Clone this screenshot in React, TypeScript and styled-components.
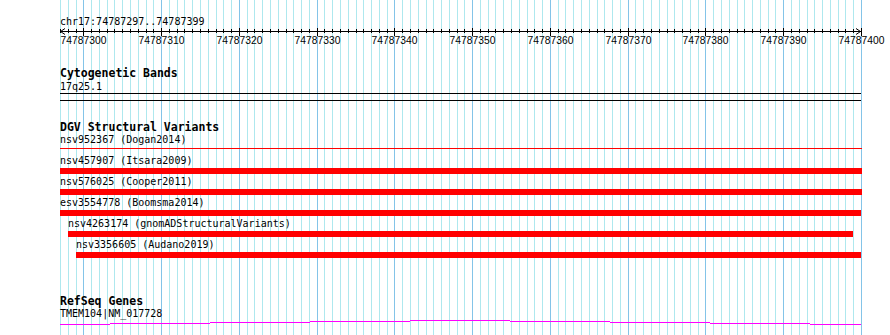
import React from "react";
import styled, { createGlobalStyle } from "styled-components";

const START = 74787297;
const BP = 103;
const LEFT = 60;
const WIDTH = 801;
const PX = WIDTH / BP;

// pixel column (page coords) of a base boundary
const bpX = (i: number) => Math.round(LEFT + i * PX);

const GlobalStyle = createGlobalStyle`
  html, body {
    margin: 0;
    padding: 0;
    background: #ffffff;
  }
  body {
    font-family: "DejaVu Sans Mono", "Liberation Mono", monospace;
  }
`;

const Page = styled.div`
  position: relative;
  width: 890px;
  height: 335px;
  overflow: hidden;
  background: #ffffff;
`;

const GridLayer = styled.svg`
  position: absolute;
  top: 0;
  left: 0;
  z-index: 0;
`;

const Tracks = styled.div`
  position: relative;
  z-index: 1;
  display: flex;
  flex-direction: column;
  margin-left: ${LEFT}px;
  width: ${WIDTH}px;
`;

const Ruler = styled.div`
  display: flex;
  flex-direction: column;
  padding-top: 16px;
`;

const Label = styled.div<{ $indent?: number; $top?: number }>`
  font-family: "DejaVu Sans Mono", "Liberation Mono", monospace;
  font-size: 10px;
  line-height: 11px;
  color: #000;
  white-space: nowrap;
  padding-left: ${({ $indent }) => $indent || 0}px;
  margin-top: ${({ $top }) => $top || 0}px;
`;

const Axis = styled.svg`
  display: block;
  overflow: visible;
`;

const Track = styled.section<{ $top: number }>`
  display: flex;
  flex-direction: column;
  margin-top: ${({ $top }) => $top}px;
`;

const TrackTitle = styled.h3`
  margin: 0;
  font-family: "DejaVu Sans Mono", "Liberation Mono", monospace;
  font-weight: bold;
  font-size: 11.5px;
  line-height: 13px;
  color: #000;
  white-space: nowrap;
`;

const Band = styled.div`
  margin-top: 1px;
  height: 6px;
  border-top: 1px solid #000;
  border-bottom: 1px solid #000;
`;

const FeatureRow = styled.div`
  display: flex;
  flex-direction: column;
  padding-bottom: 2px;
`;

const BarLane = styled.div`
  position: relative;
  height: 6px;
  margin-top: 2px;
`;

const Bar = styled.div<{ $start: number; $end: number; $thin?: boolean }>`
  margin-left: ${({ $start }) => $start}px;
  width: ${({ $start, $end }) => $end - $start}px;
  height: ${({ $thin }) => ($thin ? 1 : 6)}px;
  margin-top: ${({ $thin }) => ($thin ? 1 : 0)}px;
  background: #ff0000;
`;

const GeneLane = styled.svg`
  display: block;
  overflow: visible;
`;

const variants = [
  { name: "nsv952367 (Dogan2014)", start: 0, end: 802, thin: true },
  { name: "nsv457907 (Itsara2009)", start: 0, end: 802 },
  { name: "nsv576025 (Cooper2011)", start: 0, end: 802 },
  { name: "esv3554778 (Boomsma2014)", start: 0, end: 801 },
  { name: "nsv4263174 (gnomADStructuralVariants)", start: 8, end: 793 },
  { name: "nsv3356605 (Audano2019)", start: 16, end: 801 },
];

// intron line drawn in steps, [x1, x2, y] in lane coords
const geneSteps: [number, number, number][] = [
  [0, 50, 5],
  [50, 150, 4],
  [150, 250, 3],
  [250, 350, 2],
  [350, 450, 1],
  [450, 550, 2],
  [550, 650, 3],
  [650, 750, 4],
  [750, 801, 5],
];

function Grid() {
  const lines = [];
  for (let i = 0; i <= BP; i++) {
    const major = (START + i) % 10 === 0;
    const x = bpX(i) + 0.5;
    lines.push(
      <line
        key={i}
        x1={x}
        x2={x}
        y1={0}
        y2={335}
        stroke={major ? "#84c4e8" : "#aee8ee"}
        strokeWidth={1}
      />
    );
  }
  return (
    <GridLayer width={890} height={335} shapeRendering="crispEdges">
      {lines}
    </GridLayer>
  );
}

function RulerAxis() {
  const ticks = [];
  const labels = [];
  for (let i = 0; i <= BP; i++) {
    const x = bpX(i) - LEFT + 0.5;
    const major = (START + i) % 10 === 0;
    ticks.push(
      <line key={i} x1={x} x2={x} y1={major ? 1 : 2} y2={major ? 9 : 6} stroke="#000" />
    );
    if (major) {
      labels.push(
        <text
          key={"l" + i}
          x={x}
          y={17}
          textAnchor="middle"
          fontFamily='"Liberation Sans", Arial, sans-serif'
          fontSize="10.3px"
          fill="#000"
        >
          {START + i}
        </text>
      );
    }
  }
  return (
    <Axis width={WIDTH} height={20}>
      <g shapeRendering="crispEdges">
        <line x1={0} x2={WIDTH} y1={4.5} y2={4.5} stroke="#000" />
        {ticks}
      </g>
      <polyline points="5,1.5 0.5,4.5 5,7.5" fill="none" stroke="#000" />
      <polyline points={`${WIDTH - 5},1.5 ${WIDTH - 0.5},4.5 ${WIDTH - 5},7.5`} fill="none" stroke="#000" />
      {labels}
    </Axis>
  );
}

export default function App() {
  return (
    <Page>
      <GlobalStyle />
      <Grid />
      <Tracks>
        <Ruler>
          <Label>chr17:74787297..74787399</Label>
          <RulerAxis />
        </Ruler>

        <Track $top={20}>
          <TrackTitle>Cytogenetic Bands</TrackTitle>
          <Label $top={1}>17q25.1</Label>
          <Band />
        </Track>

        <Track $top={20}>
          <TrackTitle>DGV Structural Variants</TrackTitle>
          {variants.map((v) => (
            <FeatureRow key={v.name}>
              <Label $indent={v.start}>{v.name}</Label>
              <BarLane>
                <Bar $start={v.start} $end={v.end} $thin={v.thin} />
              </BarLane>
            </FeatureRow>
          ))}
        </Track>

        <Track $top={35}>
          <TrackTitle>RefSeq Genes</TrackTitle>
          <Label>TMEM104|NM_017728</Label>
          <GeneLane width={WIDTH} height={8} shapeRendering="crispEdges">
            {geneSteps.map(([x1, x2, y], i) => (
              <line key={i} x1={x1} x2={x2} y1={y + 0.5} y2={y + 0.5} stroke="#ff00ff" />
            ))}
          </GeneLane>
        </Track>
      </Tracks>
    </Page>
  );
}
